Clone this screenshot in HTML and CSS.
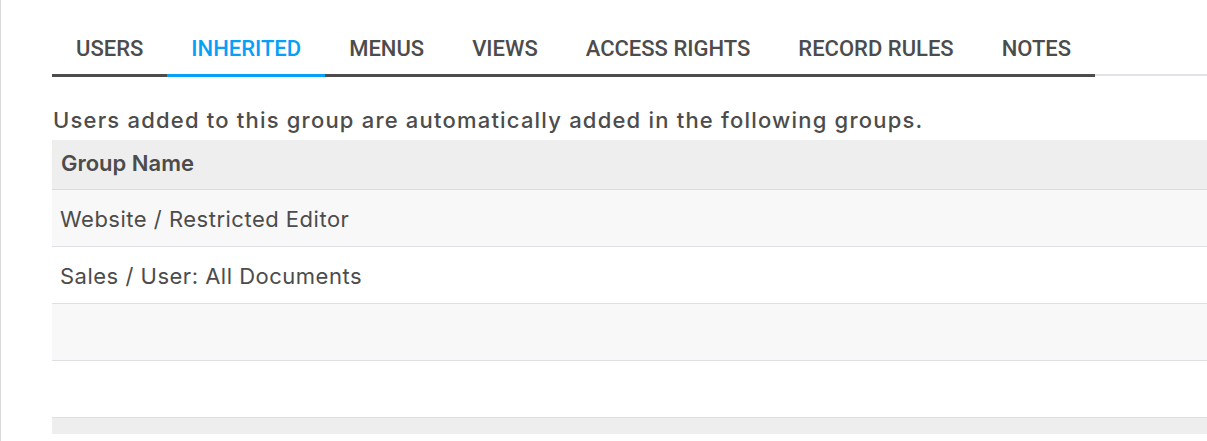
FILE: index.html
```html
<!DOCTYPE html>
<html>
<head>
<meta charset="utf-8">
<link rel="stylesheet" href="styles.css">
</head>
<body>
<div class="page">
  <div class="content">
    <div class="tabs">
      <ul class="nav">
        <li class="tab">USERS</li>
        <li class="tab active">INHERITED</li>
        <li class="tab">MENUS</li>
        <li class="tab">VIEWS</li>
        <li class="tab">ACCESS RIGHTS</li>
        <li class="tab">RECORD RULES</li>
        <li class="tab">NOTES</li>
      </ul>
      <div class="nav-rest"></div>
    </div>
    <p class="intro">Users added to this group are automatically added in the following groups.</p>
    <table class="list">
      <thead>
        <tr><th>Group Name</th></tr>
      </thead>
      <tbody>
        <tr class="odd"><td>Website / Restricted Editor</td></tr>
        <tr><td>Sales / User: All Documents</td></tr>
        <tr class="odd"><td></td></tr>
        <tr><td></td></tr>
      </tbody>
      <tfoot>
        <tr><td></td></tr>
      </tfoot>
    </table>
  </div>
</div>
</body>
</html>
```

FILE: styles.css
```css
html, body {
  margin: 0;
  padding: 0;
  background: #fff;
}
body {
  font-family: Inter, Roboto, "Liberation Sans", sans-serif;
  color: #4c4c4c;
  overflow: hidden;
}
.page {
  height: 441px;
  border-left: 1px solid #d9d9d9;
  overflow: hidden;
}
.content {
  padding: 23px 0 0 51px;
}
.tabs {
  display: flex;
  align-items: flex-end;
}
.nav {
  display: flex;
  list-style: none;
  margin: 0;
  padding: 0;
}
.tab {
  font-family: Roboto, "Liberation Sans", sans-serif;
  font-size: 22px;
  line-height: 27px;
  font-weight: 500;
  padding: 12px 24px 12px;
  border-bottom: 3px solid #4c4c4c;
  color: #4c4c4c;
  white-space: nowrap;
}
.tab.active {
  color: #06a0f6;
  border-bottom-color: #06a0f6;
}
.nav-rest {
  flex: 1;
  border-bottom: 2px solid #e2e3e8;
  margin-bottom: 1px;
}
.intro {
  margin: 30px 0 7px;
  font-size: 22px;
  line-height: 26px;
  font-weight: 500;
  letter-spacing: 1.2px;
  padding-left: 1px;
}
.list {
  width: 100%;
  border-collapse: collapse;
  font-size: 22px;
  line-height: 26px;
}
.list th {
  text-align: left;
  font-weight: 600;
  background: #eeeeee;
  padding: 10px 9px 13px;
  height: 26px;
  border-bottom: 1px solid #dcdcdc;
  box-shadow: 0 3px 6px -3px rgba(0,0,0,0.08);
}
.list td {
  height: 26px;
  padding: 16px 8px 14px;
  letter-spacing: 0.5px;
  border-bottom: 1px solid #dfe0e6;
  background: #fff;
}
.list tr.odd td {
  background: #f8f8f8;
}
.list tfoot td {
  height: 16px;
  padding: 0;
  background: #eeeeee;
  border-bottom: none;
}
```
